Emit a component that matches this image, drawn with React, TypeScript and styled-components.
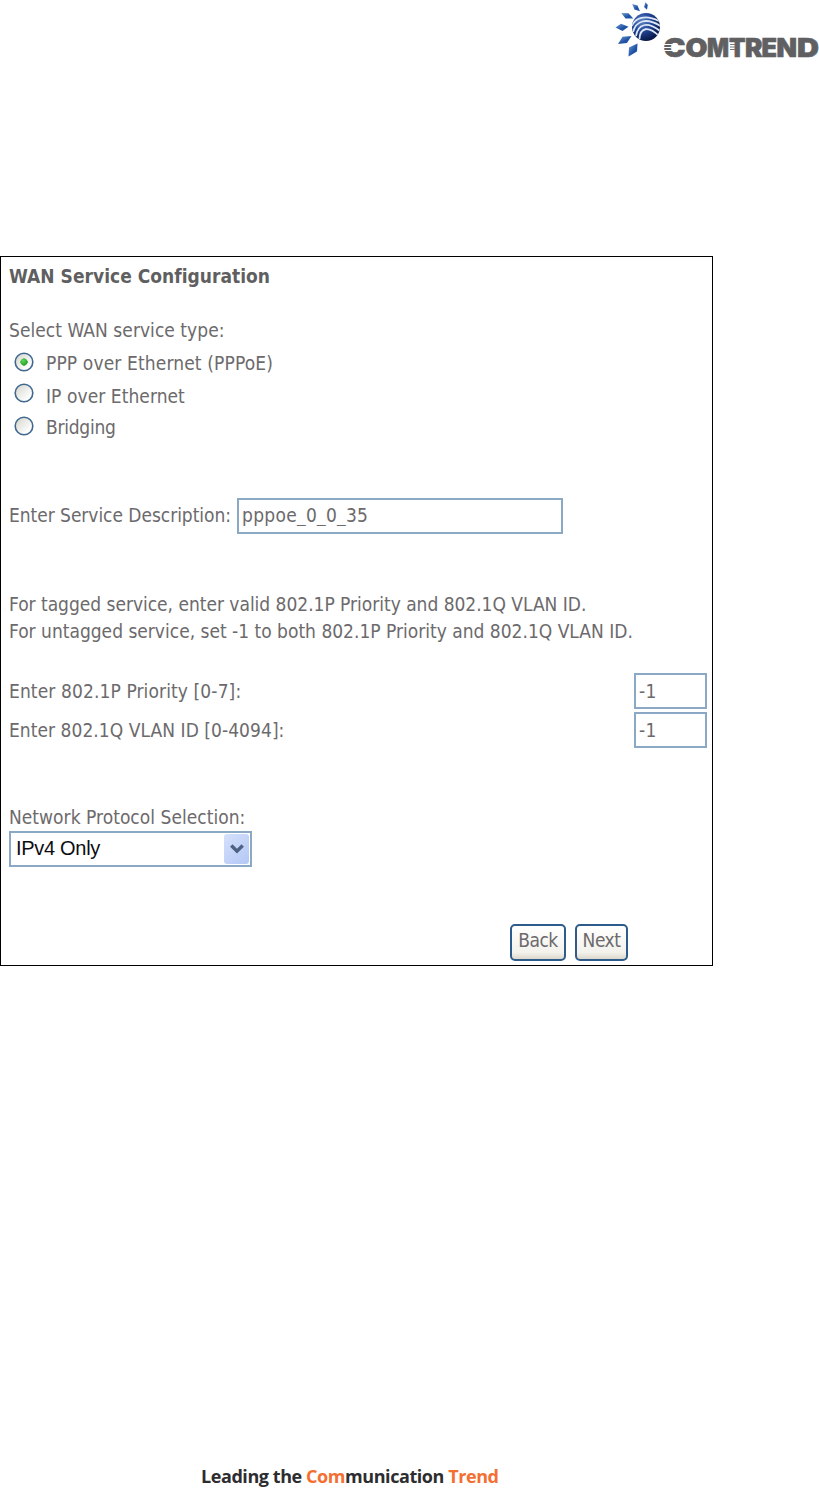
import styled, { createGlobalStyle } from "styled-components";
import { useState } from "react";

const serviceTypes = [
  { id: "pppoe", title: "PPP over Ethernet (PPPoE)", height: 31, offset: 0, spacing: 0.13 },
  { id: "ipoe", title: "IP over Ethernet", height: 33, offset: 2, spacing: 0.06 },
  { id: "bridge", title: "Bridging", height: 23, offset: 0, spacing: -0.25 },
];

const logoLetters = [
  { char: "C", x: 58.5, width: 22 },
  { char: "O", x: 80.5, width: 22 },
  { char: "M", x: 102, width: 22 },
  { char: "T", x: 124, width: 16.5 },
  { char: "R", x: 140, width: 17.5 },
  { char: "E", x: 156.5, width: 15.5 },
  { char: "N", x: 171.5, width: 20.5 },
  { char: "D", x: 192, width: 22 },
];

export default function App() {
  const [serviceType, setServiceType] = useState("pppoe");

  return (
    <Page>
      <GlobalStyle />
      <Header>
        <Logo />
      </Header>
      <Panel>
        <Title>WAN Service Configuration</Title>
        <Line $top={32} $spacing={0.04}>
          Select WAN service type:
        </Line>
        <RadioList>
          {serviceTypes.map((type) => (
            <RadioRow
              key={type.id}
              $height={type.height}
              onClick={() => setServiceType(type.id)}
            >
              <RadioIcon checked={serviceType === type.id} />
              <RadioLabel $offset={type.offset} $spacing={type.spacing}>
                {type.title}
              </RadioLabel>
            </RadioRow>
          ))}
        </RadioList>
        <Field $top={59}>
          <FieldLabel $width={228} $top={6} $spacing={-0.04}>
            Enter Service Description:
          </FieldLabel>
          <Input $width={326} $bottom={2} defaultValue="pppoe_0_0_35" />
        </Field>
        <Line $top={59} $spacing={-0.02}>
          For tagged service, enter valid 802.1P Priority and 802.1Q VLAN ID.
        </Line>
        <Line $top={5} $spacing={0}>
          For untagged service, set -1 to both 802.1P Priority and 802.1Q VLAN
          ID.
        </Line>
        <Field $top={31}>
          <FieldLabel $width={625} $top={7} $spacing={0.11}>
            Enter 802.1P Priority [0-7]:
          </FieldLabel>
          <Input $width={73} $bottom={0} defaultValue="-1" />
        </Field>
        <Field $top={3}>
          <FieldLabel $width={625} $top={7} $spacing={0.05}>
            Enter 802.1Q VLAN ID [0-4094]:
          </FieldLabel>
          <Input $width={73} $bottom={0} defaultValue="-1" />
        </Field>
        <Line $top={58} $spacing={0.03}>
          Network Protocol Selection:
        </Line>
        <Select>
          <SelectValue>IPv4 Only</SelectValue>
          <SelectArrow>
            <svg width="14" height="10" viewBox="0 0 14 10">
              <path d="M1.3 1.5 7 7.2l5.7-5.7" fill="none" stroke="#4d6185" strokeWidth="3.4" />
            </svg>
          </SelectArrow>
        </Select>
        <Buttons>
          <Button $width={56}>Back</Button>
          <Button $width={53}>Next</Button>
        </Buttons>
      </Panel>
      <Footer>
        Leading the <Accent>Com</Accent>munication <Accent>Trend</Accent>
      </Footer>
    </Page>
  );
}

function RadioIcon({ checked }: { checked: boolean }) {
  return (
    <svg width="20" height="20" viewBox="0 0 20 20">
      <defs>
        <linearGradient id="radioFill" x1="0" y1="0" x2="1" y2="1">
          <stop offset="0.15" stopColor="#dcdcd6" />
          <stop offset="0.8" stopColor="#ffffff" />
        </linearGradient>
        <radialGradient id="radioDot" cx="0.4" cy="0.35" r="0.65">
          <stop offset="0" stopColor="#60d45c" />
          <stop offset="1" stopColor="#1b9c1b" />
        </radialGradient>
      </defs>
      <circle cx="10" cy="10" r="8.8" fill="url(#radioFill)" stroke="#41698f" strokeWidth="1.6" />
      {checked && <path d="M10 5.9 12.500 7.500 14.100 10 12.500 12.500 10 14.100 7.500 12.500 5.900 10 7.500 7.500Z" fill="url(#radioDot)" />}
    </svg>
  );
}

function Logo() {
  return (
    <svg width="214" height="64" viewBox="0 0 214 64">
      <defs>
        <radialGradient id="globe" cx="0.35" cy="0.3" r="0.75">
          <stop offset="0" stopColor="#5f84c4" />
          <stop offset="0.45" stopColor="#23479a" />
          <stop offset="1" stopColor="#061440" />
        </radialGradient>
        <linearGradient id="ray" x1="0" y1="0" x2="1" y2="1">
          <stop offset="0" stopColor="#6d9bd6" />
          <stop offset="0.6" stopColor="#1d50a2" />
          <stop offset="1" stopColor="#2a62b4" />
        </linearGradient>
        <clipPath id="globeClip">
          <circle cx="41" cy="27" r="14" />
        </clipPath>
      </defs>
      {/* rays around the globe */}
      <g fill="url(#ray)">
        <path d="M40.500 2.300 42.800 5 42 9.700 39 7Z" />
        <path d="M27.200 4 32.500 5.500 35 11.200 29.500 9.500Z" />
        <path d="M16.300 13 23.500 13.200 28.300 18.600 20.500 18.500Z" />
        <path d="M10.500 27.500 16 23.800 23.500 26.800 17.500 31Z" />
        <path d="M13 44 17.500 36.800 26.500 36 22 43Z" />
        <path d="M23.500 56.500 24 47.500 32.500 43.500 32 51.500Z" />
      </g>
      <circle cx="41" cy="27" r="14" fill="url(#globe)" />
      {/* bands rising from the lower left and bending to the right */}
      <g clipPath="url(#globeClip)" fill="none" stroke="#dbe6f5" strokeWidth="1.8">
        <path d="M27 26C30 18 40 14 54 21" />
        <path d="M28 32C31 21 41 17 55.500 26" />
        <path d="M31 36C33 24 42 21 55 31" />
        <path d="M34.500 39C35 28 43 25 54 36" />
      </g>
      <g
        fontFamily="Inter, 'Liberation Sans', sans-serif"
        fontSize="25.5"
        fontWeight="900"
        fill="#606062"
        stroke="#606062"
        strokeWidth="0.6"
      >
        {logoLetters.map((letter) => (
          <text
            key={letter.char}
            x={letter.x}
            y="57"
            textLength={letter.width}
            lengthAdjust="spacingAndGlyphs"
          >
            {letter.char}
          </text>
        ))}
      </g>
      {/* speed lines on the C and beside the T */}
      <path d="M58 44.500h9M58 47.500h8M58 50.500h9" stroke="#ffffff" strokeWidth="1" />
      <path d="M125 44.500h5M125 47h5M125 49.500h5" stroke="#77777a" strokeWidth="1" />
    </svg>
  );
}

const GlobalStyle = createGlobalStyle`
  * {
    box-sizing: border-box;
  }

  body {
    margin: 0;
    background-color: #fff;
  }
`;

const Page = styled.div`
  display: flex;
  flex-direction: column;
  width: 819px;
  height: 1500px;
  overflow: hidden;
  font-family: "DejaVu Sans Condensed", "DejaVu Sans", sans-serif;
  font-stretch: condensed;
  font-size: 19px;
  line-height: 22px;
  color: #6c6a6c;
`;

const Header = styled.div`
  display: flex;
  justify-content: flex-end;
  height: 256px;
`;

// main framed form
const Panel = styled.div`
  display: flex;
  flex-direction: column;
  width: 713px;
  height: 710px;
  padding: 8px 0 0 8px;
  border: 1px solid #000;
`;

const Title = styled.div`
  font-weight: bold;
  letter-spacing: 0.02px;
  color: #5f5f61;
  white-space: nowrap;
`;

const Line = styled.div<{ $top: number; $spacing: number }>`
  margin-top: ${(props) => props.$top}px;
  letter-spacing: ${(props) => props.$spacing}px;
  white-space: nowrap;
`;

const RadioList = styled.div`
  margin: 11px 0 0 5px;
`;

const RadioRow = styled.div<{ $height: number }>`
  display: flex;
  align-items: flex-start;
  gap: 12px;
  height: ${(props) => props.$height}px;
  cursor: pointer;
`;

const RadioLabel = styled.div<{ $offset: number; $spacing: number }>`
  padding-top: ${(props) => props.$offset}px;
  letter-spacing: ${(props) => props.$spacing}px;
`;

const Field = styled.div<{ $top: number }>`
  display: flex;
  margin-top: ${(props) => props.$top}px;
`;

const FieldLabel = styled.div<{ $width: number; $top: number; $spacing: number }>`
  width: ${(props) => props.$width}px;
  padding-top: ${(props) => props.$top}px;
  letter-spacing: ${(props) => props.$spacing}px;
  white-space: nowrap;
`;

const Input = styled.input<{ $width: number; $bottom: number }>`
  width: ${(props) => props.$width}px;
  height: 36px;
  padding: 0 3px ${(props) => props.$bottom}px;
  border: 2px solid #8ba8c5;
  font: inherit;
  letter-spacing: 0.3px;
  color: inherit;

  &:focus {
    outline: none;
  }
`;

const Select = styled.div`
  display: flex;
  justify-content: space-between;
  width: 243px;
  height: 36px;
  margin-top: 3px;
  padding: 1px 1px 1px 5px;
  border: 2px solid #8ba8c5;
  color: #0c0c12;
`;

const SelectValue = styled.span`
  font-family: "Liberation Sans", Arial, sans-serif;
  font-size: 20px;
  line-height: 28px;
  letter-spacing: -0.3px;
`;

const SelectArrow = styled.div`
  display: flex;
  align-items: center;
  justify-content: center;
  width: 25px;
  height: 30px;
  border-radius: 3px;
  background: linear-gradient(135deg, #d5e0fc, #b3c8f5);
`;

const Buttons = styled.div`
  display: flex;
  gap: 9px;
  margin: 57px 0 0 501px;
`;

const Button = styled.button<{ $width: number }>`
  width: ${(props) => props.$width}px;
  height: 37px;
  padding: 0 0 5px;
  border: 2px solid #2d5c8a;
  border-radius: 5px;
  background: linear-gradient(#ffffff, #f3f2ec 80%, #dcd8cc);
  font: inherit;
  letter-spacing: -0.5px;
  color: inherit;
`;

const Footer = styled.div`
  margin: 499px 0 0 201px;
  font-family: "Open Sans", "Noto Sans", sans-serif;
  font-stretch: normal;
  font-size: 18px;
  font-weight: 700;
  letter-spacing: -0.43px;
  color: #2d2d2f;
  white-space: nowrap;
`;

const Accent = styled.span`
  color: #f46f32;
`;
